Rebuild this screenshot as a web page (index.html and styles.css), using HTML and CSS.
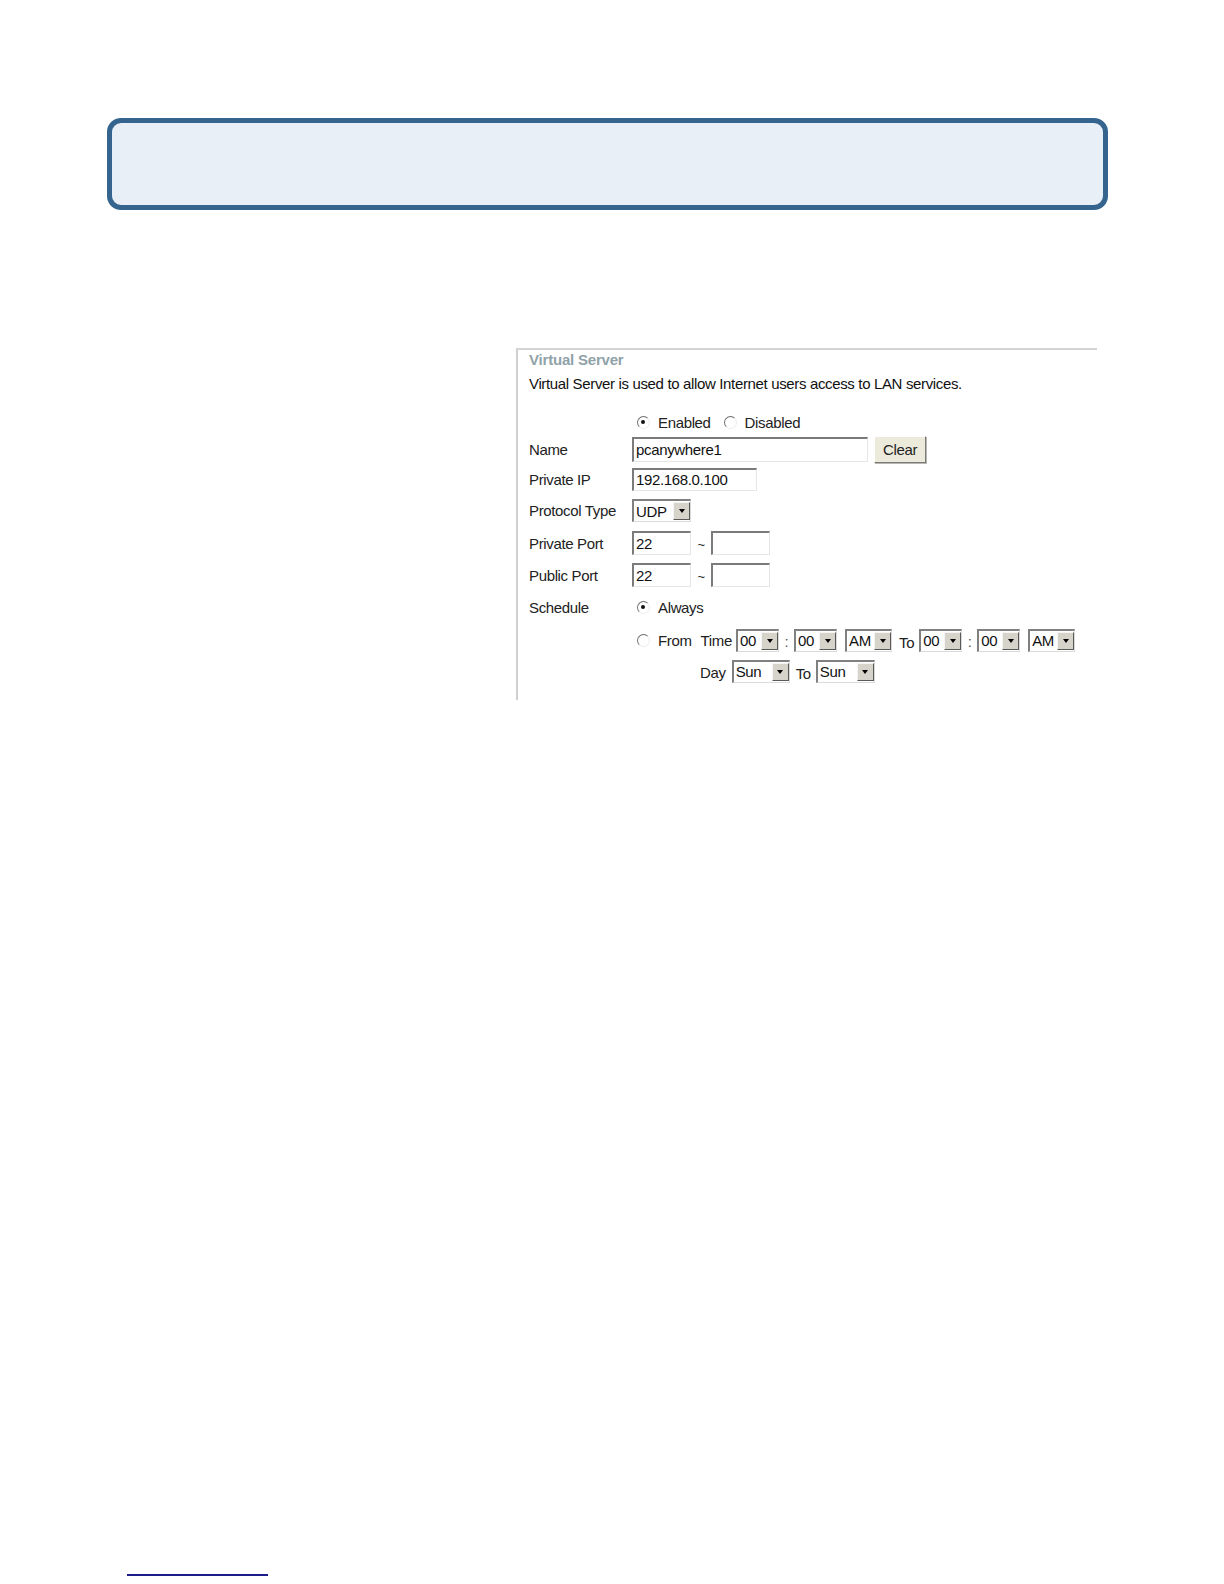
FILE: index.html
```html
<!DOCTYPE html>
<html lang="en">
<head>
<meta charset="utf-8">
<title>Virtual Server</title>
<link rel="stylesheet" href="styles.css">
</head>
<body>
<div class="page">
  <div class="banner"></div>

  <div class="shot">
    <div class="row title-row"><span class="title">Virtual Server</span></div>
    <div class="row desc-row">Virtual Server is used to allow Internet users access to LAN services.</div>

    <div class="row r-radio">
      <span class="lbl"></span>
      <span class="radio on"></span><span class="rtxt">Enabled</span>
      <span class="radio"></span><span class="rtxt">Disabled</span>
    </div>

    <div class="row r-name">
      <span class="lbl">Name</span>
      <span class="field w-name">pcanywhere1</span>
      <span class="button">Clear</span>
    </div>

    <div class="row r-ip">
      <span class="lbl">Private IP</span>
      <span class="field w-ip">192.168.0.100</span>
    </div>

    <div class="row r-proto">
      <span class="lbl">Protocol Type</span>
      <span class="sel w-udp"><span class="v">UDP</span><span class="btn"><span class="arr"></span></span></span>
    </div>

    <div class="row r-port">
      <span class="lbl">Private Port</span>
      <span class="field w-port">22</span>
      <span class="tilde">~</span>
      <span class="field w-port"></span>
    </div>

    <div class="row r-port">
      <span class="lbl">Public Port</span>
      <span class="field w-port">22</span>
      <span class="tilde">~</span>
      <span class="field w-port"></span>
    </div>

    <div class="row r-sched">
      <span class="lbl">Schedule</span>
      <span class="radio on"></span><span class="rtxt">Always</span>
    </div>

    <div class="row r-from">
      <span class="lbl"></span>
      <span class="radio"></span><span class="rtxt t-from">From</span>
      <span class="t-time">Time</span>
      <span class="sel w-hr"><span class="v">00</span><span class="btn"><span class="arr"></span></span></span>
      <span class="colon">:</span>
      <span class="sel w-hr"><span class="v">00</span><span class="btn"><span class="arr"></span></span></span>
      <span class="sel w-am"><span class="v">AM</span><span class="btn"><span class="arr"></span></span></span>
      <span class="to">To</span>
      <span class="sel w-hr"><span class="v">00</span><span class="btn"><span class="arr"></span></span></span>
      <span class="colon">:</span>
      <span class="sel w-hr"><span class="v">00</span><span class="btn"><span class="arr"></span></span></span>
      <span class="sel w-am"><span class="v">AM</span><span class="btn"><span class="arr"></span></span></span>
    </div>

    <div class="row r-day">
      <span class="lbl"></span>
      <span class="t-day">Day</span>
      <span class="sel w-sun"><span class="v">Sun</span><span class="btn"><span class="arr"></span></span></span>
      <span class="to">To</span>
      <span class="sel w-sun2"><span class="v">Sun</span><span class="btn"><span class="arr"></span></span></span>
    </div>
  </div>

  <div class="footline"></div>
</div>
</body>
</html>
```

FILE: styles.css
```css
html, body {
  margin: 0;
  padding: 0;
  background: #ffffff;
}

body {
  font-family: "Liberation Sans", Arial, sans-serif;
  color: #1a1a1a;
}

.page {
  width: 1224px;
  display: flex;
  flex-direction: column;
}

.banner {
  margin: 118px 0 0 107px;
  width: 1001px;
  height: 92px;
  box-sizing: border-box;
  border: 5px solid #35658f;
  border-radius: 14px;
  background: #e9eff6;
}

.shot {
  margin: 138px 0 0 516px;
  width: 581px;
  height: 352px;
  box-sizing: border-box;
  border-top: 2px solid #d4d4d4;
  border-left: 2px solid #d0d0d0;
  padding-left: 11px;
  display: flex;
  flex-direction: column;
  font-size: 15px;
  letter-spacing: -0.35px;
}

.row {
  display: flex;
  align-items: center;
  flex: none;
}

.title-row { height: 19px; }
.title {
  font-weight: bold;
  color: #8fa3a8;
  font-size: 15px;
  letter-spacing: -0.2px;
}

.desc-row { height: 28px; color: #111; }

.r-radio { height: 24px; margin-top: 13px; }
.r-name  { height: 30px; }
.r-ip    { height: 30px; }
.r-proto { height: 33px; }
.r-port  { height: 32px; }
.r-sched { height: 33px; }
.r-from  { height: 32px; }
.r-day   { height: 30px; }

.lbl {
  width: 103px;
  flex: none;
  color: #222;
}

.radio {
  box-sizing: border-box;
  width: 13px;
  height: 13px;
  margin-left: 5px;
  border-radius: 50%;
  border: 1.5px solid;
  border-color: #6f6f6f #ececec #ececec #6f6f6f;
  background: #fff;
  position: relative;
  flex: none;
}
.radio.on::after {
  content: "";
  position: absolute;
  left: 3px;
  top: 3px;
  width: 4px;
  height: 4px;
  border-radius: 50%;
  background: #111;
}

.rtxt {
  margin-left: 8px;
  margin-right: 8px;
  color: #222;
}

.field {
  box-sizing: border-box;
  height: 24px;
  display: inline-flex;
  align-items: center;
  padding: 0 2px;
  border-style: solid;
  border-width: 2px 1px 1px 2px;
  border-color: #7b7b7b #e6e6e6 #e6e6e6 #7b7b7b;
  background: #fff;
  color: #111;
  flex: none;
}

.w-name { width: 236px; height: 25px; }
.w-ip { width: 125px; height: 23px; }
.w-port { width: 59px; }

.tilde {
  width: 20px;
  text-align: center;
  font-size: 13px;
  padding-top: 3px;
}

.button {
  box-sizing: border-box;
  width: 52px;
  height: 27px;
  margin-left: 6px;
  display: inline-flex;
  align-items: center;
  justify-content: center;
  background: #ebeadb;
  border: 1px solid;
  border-color: #ffffff #7a7a7a #7a7a7a #ffffff;
  box-shadow: 1px 1px 0 #b8b8b0;
  color: #222;
}

.sel {
  box-sizing: border-box;
  height: 23px;
  display: inline-flex;
  align-items: stretch;
  border-style: solid;
  border-width: 2px 1px 1px 2px;
  border-color: #808080 #dadada #dadada #808080;
  background: #fff;
  flex: none;
}
.sel .v {
  flex: 1;
  display: flex;
  align-items: center;
  padding-left: 2px;
  color: #111;
}
.sel .btn {
  box-sizing: border-box;
  width: 17px;
  margin: 1px 0 1px 0;
  background: #d6d3ca;
  border: 1px solid;
  border-color: #f4f4f4 #5a5a5a #5a5a5a #f4f4f4;
  display: flex;
  align-items: center;
  justify-content: center;
}
.arr {
  width: 0;
  height: 0;
  border-left: 3.5px solid transparent;
  border-right: 3.5px solid transparent;
  border-top: 4px solid #000;
}

.w-udp { width: 59px; }
.w-hr { width: 43px; }
.w-am { width: 47px; margin-left: 8px; }
.w-sun { width: 58px; }
.w-sun2 { width: 59px; }

.t-from { margin-right: 9px; }
.t-time { margin-right: 4px; color: #222; }

.colon {
  width: 15px;
  text-align: center;
  color: #555;
  padding-top: 2px;
}

.to {
  margin: 0 5px 0 7px;
  padding-top: 4px;
  color: #222;
}

.r-day .lbl { width: 171px; }
.t-day { margin-right: 6px; padding-top: 3px; color: #222; }
.r-day .to { margin: 0 5px 0 6px; }

.footline {
  margin: 874px 0 0 127px;
  width: 141px;
  height: 2px;
  background: #1c1c8a;
}
```
